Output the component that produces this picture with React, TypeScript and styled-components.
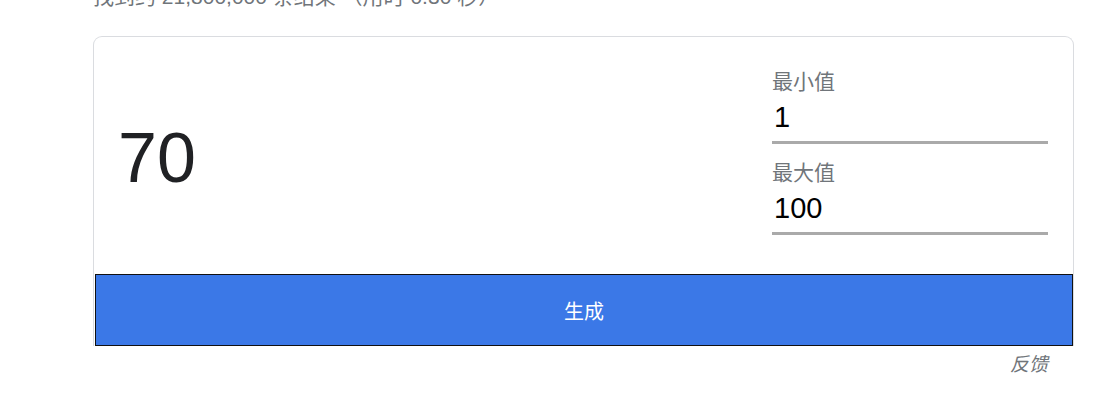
import React from 'react';
import styled, { createGlobalStyle } from 'styled-components';

const GlobalStyle = createGlobalStyle`
  body {
    margin: 0;
    background: #ffffff;
    font-family: Arial, "Liberation Sans", "Noto Sans CJK SC", sans-serif;
    overflow: hidden;
  }
`;

const Page = styled.div`
  padding-left: 93px;
`;

const Stats = styled.div`
  margin-top: -17px;
  height: 28px;
  line-height: 28px;
  font-size: 21px;
  color: #70757a;
  white-space: nowrap;
`;

const Card = styled.div`
  margin-top: 25px;
  width: 981px;
  box-sizing: border-box;
  border: 1px solid #dadce0;
  border-bottom: none;
  border-radius: 9px 9px 0 0;
`;

const CardBody = styled.div`
  height: 237px;
  display: flex;
  align-items: stretch;
`;

const Result = styled.div`
  flex: 1;
  display: flex;
  align-items: center;
  padding-left: 24px;
  padding-top: 4px;
  font-size: 70px;
  line-height: 1;
  color: #202124;
`;

const Range = styled.div`
  width: 276px;
  margin-right: 25px;
  padding-top: 33px;
  display: flex;
  flex-direction: column;
  gap: 17px;
`;

const Field = styled.label`
  display: flex;
  flex-direction: column;
`;

const FieldLabel = styled.span`
  font-size: 21px;
  line-height: 24px;
  color: #70757a;
`;

const FieldInput = styled.input`
  height: 50px;
  box-sizing: border-box;
  width: 100%;
  padding: 0 2px;
  border: none;
  border-bottom: 3px solid #aaaaaa;
  outline: none;
  background: transparent;
  font-family: Arial, "Liberation Sans", sans-serif;
  font-size: 29px;
  color: #000000;
`;

const GenerateButton = styled.button`
  display: block;
  margin-left: 1px;
  width: 978px;
  height: 72px;
  box-sizing: border-box;
  border: 1px solid #111111;
  background: #3b78e7;
  color: #ffffff;
  font-family: Arial, "Liberation Sans", "Noto Sans CJK SC", sans-serif;
  font-size: 20px;
  cursor: pointer;
`;

const FeedbackRow = styled.div`
  width: 981px;
  padding-right: 26px;
  box-sizing: border-box;
  margin-top: 7px;
  display: flex;
  justify-content: flex-end;
`;

const Feedback = styled.a`
  font-size: 19px;
  line-height: 24px;
  font-style: italic;
  color: #70757a;
  text-decoration: none;
`;

export default function App() {
  return (
    <Page>
      <GlobalStyle />
      <Stats>找到约 21,800,000 条结果 （用时 0.30 秒）</Stats>
      <Card>
        <CardBody>
          <Result>70</Result>
          <Range>
            <Field>
              <FieldLabel>最小值</FieldLabel>
              <FieldInput type="text" defaultValue="1" />
            </Field>
            <Field>
              <FieldLabel>最大值</FieldLabel>
              <FieldInput type="text" defaultValue="100" />
            </Field>
          </Range>
        </CardBody>
        <GenerateButton>生成</GenerateButton>
      </Card>
      <FeedbackRow>
        <Feedback href="#">反馈</Feedback>
      </FeedbackRow>
    </Page>
  );
}
